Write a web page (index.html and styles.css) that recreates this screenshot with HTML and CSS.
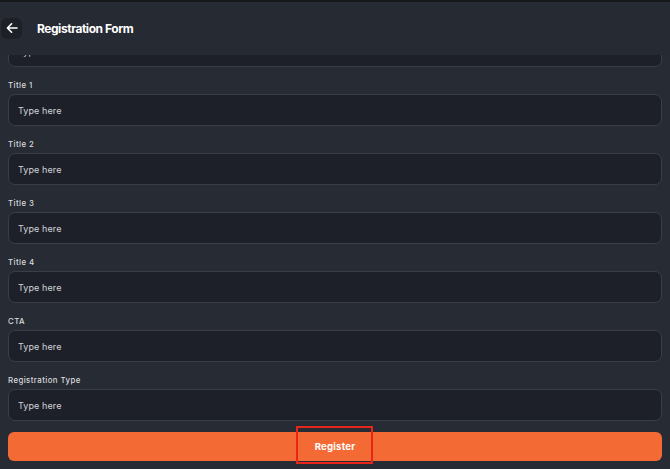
FILE: index.html
```html
<!DOCTYPE html>
<html>
<head>
<meta charset="utf-8">
<link rel="stylesheet" href="styles.css">
</head>
<body>
<div class="app">
  <header class="topbar">
    <button class="back" aria-label="Back">
      <svg width="12" height="12" viewBox="0 0 12 12"><path d="M11 6H1.6M5.6 1.8L1.4 6l4.2 4.2" fill="none" stroke="#fff" stroke-width="1.6" stroke-linecap="round" stroke-linejoin="round"/></svg>
    </button>
    <h1 class="title">Registration Form</h1>
  </header>
  <main class="form">
    <div class="field"><label class="label">Title</label><div class="input">Type here</div></div>
    <div class="field"><label class="label">Title 1</label><div class="input">Type here</div></div>
    <div class="field"><label class="label">Title 2</label><div class="input">Type here</div></div>
    <div class="field"><label class="label">Title 3</label><div class="input">Type here</div></div>
    <div class="field"><label class="label">Title 4</label><div class="input">Type here</div></div>
    <div class="field"><label class="label">CTA</label><div class="input">Type here</div></div>
    <div class="field last"><label class="label">Registration Type</label><div class="input">Type here</div></div>
    <button class="register"><span class="register-text">Register</span><span class="highlight"></span></button>
  </main>
</div>
</body>
</html>
```
FILE: styles.css
```css
* { box-sizing: border-box; }
html, body { margin: 0; padding: 0; }
body {
  width: 670px;
  height: 469px;
  overflow: hidden;
  background: #272b34;
  font-family: Inter, "Noto Sans", sans-serif;
  color: #e6e7ea;
}
.app { display: flex; flex-direction: column; height: 469px; overflow: hidden; }
.topbar {
  position: sticky;
  top: 0;
  z-index: 2;
  height: 55px;
  flex: none;
  border-top: 2px solid #16181c;
  background: #262a33;
  display: flex;
  align-items: center;
  padding-left: 1px;
  gap: 15px;
}
.back {
  width: 21px;
  height: 21px;
  border: 0;
  border-radius: 6px;
  background: #1d2027;
  display: flex;
  align-items: center;
  justify-content: center;
  padding: 0;
  margin-top: -1px;
}
.title {
  margin: 0;
  font-size: 12px;
  font-weight: 700;
  color: #ffffff;
  letter-spacing: -0.45px;
  margin-top: -1px;
}
.form {
  position: relative;
  z-index: 1;
  margin-top: -34px;
  padding: 0 8px;
  display: flex;
  flex-direction: column;
}
.field { display: flex; flex-direction: column; gap: 4px; margin-bottom: 13px; }
.field.last { margin-bottom: 11px; }
.label {
  font-size: 7.8px;
  line-height: 10px;
  font-weight: 500;
  color: #d9dbdf;
  letter-spacing: 0.45px;
}
.input {
  height: 32px;
  border: 1px solid #3a3e49;
  border-radius: 7px;
  background: #1e2029;
  padding-left: 9px;
  display: flex;
  align-items: center;
  font-size: 9px;
  color: #d2d4d8;
  letter-spacing: 0.1px;
}
.register {
  position: relative;
  height: 29px;
  border: 0;
  border-radius: 6px;
  background: #f36a35;
  color: #ffffff;
  font-family: Inter, "Noto Sans", sans-serif;
  font-size: 9.6px;
  font-weight: 700;
  letter-spacing: 0.2px;
  display: flex;
  align-items: center;
  justify-content: center;
  padding: 0;
}
.highlight {
  position: absolute;
  left: 288px;
  top: -6px;
  width: 77px;
  height: 38px;
  border: 2px solid #e8251b;
}
```
